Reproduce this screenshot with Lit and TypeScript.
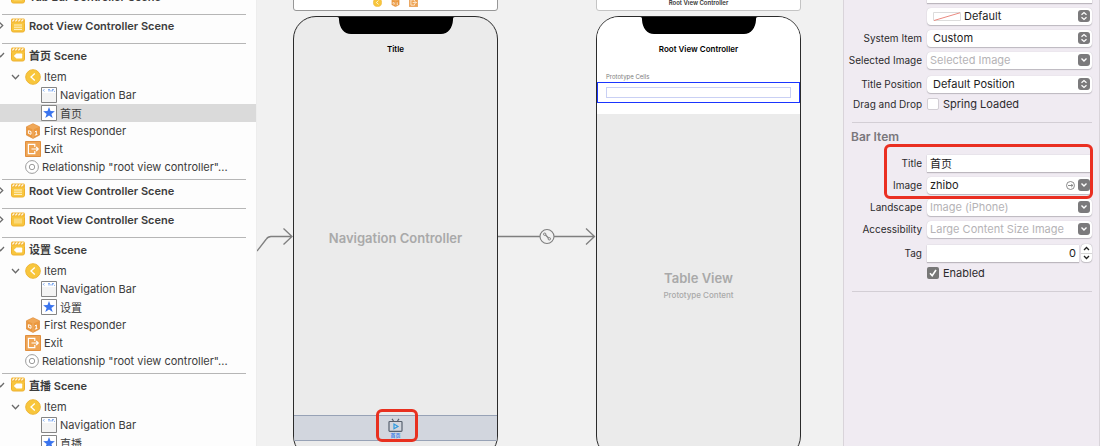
import { LitElement, html, css, svg, nothing, TemplateResult } from "lit";
import { customElement, property } from "lit/decorators.js";

const clip = (inner: TemplateResult) => svg`
  <rect x="0.5" y="3.5" width="13" height="10.5" rx="1.8" fill="#f8c63f" stroke="#eeb02f"/>
  <path d="M0 4.500V1.600L1 .6H13L14 1.600V4.500Z" fill="#f3b738"/>
  <path d="M1.400 3.400l1.900-2M4.400 3.400l1.900-2M7.400 3.400l1.900-2M10.400 3.400l1.900-2" stroke="#fffaf0" stroke-width="1.3"/>
  ${inner}`;

const icons: Record<string, TemplateResult> = {
  lines: html`<svg width="14" height="15" viewBox="0 0 14 15">${clip(svg`<path d="M3 7h8M3 9.2h8M3 11.4h8" stroke="#fff3d0" stroke-width="1"/>`)}</svg>`,
  block: html`<svg width="14" height="15" viewBox="0 0 14 15">${clip(svg`<path d="M3 6.5h8v5H3z" fill="#fbd878"/>`)}</svg>`,
  back: html`<svg width="14" height="15" viewBox="0 0 14 15">${clip(svg`<path d="M2.8 9l2.6-2.6h5a.8.8 0 0 1 .8.8v3.6a.8.8 0 0 1-.8.8h-5z" fill="#fff"/>`)}</svg>`,
  item: html`<svg width="16" height="16" viewBox="0 0 16 16"><circle cx="8" cy="8" r="7.3" fill="#f8c63c" stroke="#eeb636"/><path d="M9.8 4.6L6 8l3.8 3.4" fill="none" stroke="#fff" stroke-width="1.3"/></svg>`,
  navbar: html`<svg width="16" height="16" viewBox="0 0 16 16"><path d="M.5.5h15v15H.5z" fill="#f4f4f4" stroke="#858585"/><path d="M1 1h14v5H1z" fill="#fff"/><path d="M3.4 2.2L2.2 3.4l1.2 1M7 2.6h2M8 2.6v2M10 3v1.6M11 2.6h2M11.6 2.6v1.8M13 4.4h.9" fill="none" stroke="#5f95ee" stroke-width=".8"/></svg>`,
  star: html`<svg width="16" height="16" viewBox="0 0 16 16"><path d="M.5.5h15v15H.5z" fill="#fff" stroke="#858585"/><path d="M8 2l1.5 4.1 4.4.1-3.5 2.7 1.3 4.2L8 10.6l-3.7 2.5 1.3-4.2L2.1 6.2l4.4-.1z" fill="#3a74ee"/></svg>`,
  cube: html`<svg width="16" height="16" viewBox="0 0 16 16"><path d="M8 .7l6.5 3.1v8.3L8 15.4l-6.5-3.3V3.8z" fill="#eb983f" stroke="#dd8834" stroke-width=".7"/><path d="M1.7 4L8 6.4 14.3 4 8 1z" fill="#f0a858"/><path d="M8 6.4v8.8" stroke="#f7c78f" stroke-width=".6"/><path d="M3.4 7.700v2.700l2.600.9V8.500zM9.800 9l1.500-1v3.800M9.800 12.200l2.600-.8" fill="none" stroke="#fff" stroke-width="1"/></svg>`,
  exit: html`<svg width="16" height="16" viewBox="0 0 16 16"><path d="M.5.5h15v15H.5z" fill="#efa453" stroke="#e08f3f"/><path d="M9.8 6V3.3H3.4v9.4h6.4V10M6.5 8h6.6M11.2 6l2 2-2 2" fill="none" stroke="#fff" stroke-width="1.2"/></svg>`,
  ring: html`<svg width="14" height="14" viewBox="0 0 14 14"><circle cx="7" cy="7" r="6.4" fill="#fff" stroke="#9c9c9c"/><circle cx="7" cy="7" r="2.7" fill="none" stroke="#9c9c9c"/></svg>`,
  down: html`<svg width="9" height="6" viewBox="0 0 9 6"><path d="M1 1l3.5 3.7L8 1" fill="none" stroke="#6a6a6a" stroke-width="1.3"/></svg>`,
  right: html`<svg width="6" height="9" viewBox="0 0 6 9"><path d="M1 1l3.7 3.5L1 8" fill="none" stroke="#6a6a6a" stroke-width="1.3"/></svg>`,
};

interface Scene { name: string; icon: string; tab?: string; selected?: boolean; }

const scenes: Scene[] = [
  { name: "Tab Bar Controller Scene", icon: "block" },
  { name: "Root View Controller Scene", icon: "lines" },
  { name: "首页 Scene", icon: "back", tab: "首页", selected: true },
  { name: "Root View Controller Scene", icon: "lines" },
  { name: "Root View Controller Scene", icon: "block" },
  { name: "设置 Scene", icon: "back", tab: "设置" },
  { name: "直播 Scene", icon: "back", tab: "直播" },
];

@customElement("scene-outline")
class SceneOutline extends LitElement {
  static styles = css`
    :host { display: block; overflow: hidden; background: #fdfdfd; border-right: 1px solid #ededed; color: #3c3c3c; font-size: 11px; }
    .list { margin: -15px 0 0; padding: 0; list-style: none; }
    .scene { padding-top: 1px; }
    .scene::before { content: ""; display: block; height: 1px; margin: -1px 10px 0 2px; background: #b6b6b6; }
    .closed { padding-bottom: 7px; }
    .open { padding-bottom: 3px; }
    .head { display: flex; align-items: center; height: 21px; margin: 0; font-size: 11px; font-weight: 600; white-space: nowrap; }
    .fold { display: flex; flex: none; width: 11px; justify-content: flex-start; }
    .fold.down { margin-left: -4px; width: 15px; }
    .fold.side { margin-left: -2px; width: 13px; }
    .head svg, .row svg { flex: none; display: block; }
    .label { margin-left: 4px; }
    .rows { margin: 3px 0 0; padding: 0; list-style: none; }
    .row { display: flex; align-items: center; height: 18px; padding-left: 25px; white-space: nowrap; }
    .row .label { margin-left: 3px; }
    .parent { padding-left: 11px; }
    .parent .twist { width: 14px; display: flex; }
    .child { padding-left: 41px; }
    .selected { background: #dadada; }
  `;
  row(icon: string, text: string, kind = "") {
    return html`<li class="row ${kind}">${kind === "parent" ? html`<span class="twist">${icons.down}</span>` : nothing}${icons[icon]}<span class="label">${text}</span></li>`;
  }
  render() {
    return html`<ul class="list">${scenes.map((s) => html`
      <li class="scene ${s.tab ? "open" : "closed"}">
        <h3 class="head"><span class="fold ${s.tab ? "down" : "side"}">${s.tab ? icons.down : icons.right}</span>${icons[s.icon]}<span class="label">${s.name}</span></h3>
        ${s.tab ? html`<ul class="rows">
          ${this.row("item", "Item", "parent")}
          ${this.row("navbar", "Navigation Bar", "child")}
          ${this.row("star", s.tab, s.selected ? "child selected" : "child")}
          ${this.row("cube", "First Responder")}
          ${this.row("exit", "Exit")}
          ${this.row("ring", "Relationship \"root view controller\"...")}
        </ul>` : nothing}
      </li>`)}</ul>`;
  }
}

@customElement("story-canvas")
class StoryCanvas extends LitElement {
  static styles = css`
    :host { display: block; position: relative; overflow: hidden; background: #f1f1f1; }
    .links { position: absolute; left: 0; top: 0; }
    .dock { position: absolute; top: -12px; width: 205px; height: 23px; box-sizing: border-box; background: #fff; border: 1px solid #979797; border-radius: 3px; display: flex; align-items: flex-end; justify-content: center; }
    .dock svg { width: 9px; height: 9px; }
    .tools { gap: 9px; padding-bottom: 3px; }
    .caption { border-color: #c4c4c4; font-size: 6px; line-height: 8px; font-weight: 600; color: #333; padding-bottom: 3px; }
    .first { left: 36px; }
    .second { left: 339px; }
    .phone { position: absolute; top: 16px; width: 205px; height: 443px; box-sizing: border-box; border: 1px solid #2b2b2b; border-radius: 23px; background: #ebebeb; overflow: hidden; display: flex; flex-direction: column; align-items: center; }
    .notch { display: block; flex: none; }
    .title { margin: 8px 0 4px; font-size: 8px; line-height: 14px; font-weight: 600; color: #000; }
    .center { flex: 1; display: flex; flex-direction: column; align-items: center; justify-content: center; color: #a9a9a9; font-size: 13px; line-height: 18px; font-weight: 600; }
    .small { font-size: 8px; line-height: 16px; font-weight: 500; }
    .tabbar { align-self: stretch; height: 24px; box-sizing: content-box; border: solid #97a2b6; border-width: 1px 0; background: #d2d6de; display: flex; justify-content: center; margin-bottom: 17px; }
    .tab { display: flex; flex-direction: column; align-items: center; justify-content: center; font-size: 5px; line-height: 7px; font-weight: 600; color: #3f83e8; }
    .top { align-self: stretch; height: 97px; background: #fff; display: flex; flex-direction: column; align-items: center; }
    .proto { align-self: stretch; margin: 12px 0 0 9px; font-size: 6px; line-height: 10px; color: #7c7c7c; }
    .cell { align-self: stretch; height: 21px; box-sizing: border-box; border: 1px solid #1a35ff; padding: 4px 8px; display: flex; }
    .content { flex: 1; border: 1px solid #c9d0f4; }
    .mark { position: absolute; left: 119px; top: 409px; width: 42px; height: 33px; box-sizing: border-box; border: 3px solid #e8301f; border-radius: 6px; }
  `;
  notch() {
    return html`<svg class="notch" width="118" height="17" viewBox="0 0 118 17"><path d="M0 0h118c-2 0-2 1-2 3-.5 8-5 14-12 14H14C7 17 2.5 11 2 3 2 1 2 0 0 0z" fill="#000"/></svg>`;
  }
  render() {
    return html`
      <svg class="links" width="345" height="300" viewBox="0 0 345 300" fill="none" stroke="#7f7f7f" stroke-width="1.3">
        <path d="M0 251L9 239.500Q11 236.500 14 236.500H34M26.500 228.500L35 236.500L26.500 244.500"/>
        <path d="M241 236.500H283M297 236.500H337M329 228.500L337.500 236.500L329 244.500"/>
        <circle cx="290" cy="236.500" r="7" stroke-width="1.1"/>
        <circle cx="287.700" cy="234.200" r="1.200" stroke-width="1"/><circle cx="292.300" cy="238.800" r="1.200" stroke-width="1"/>
        <path d="M288.500 235L291.500 238"/>
      </svg>
      <div class="dock tools first">${icons.item}${icons.cube}${icons.exit}</div>
      <div class="dock caption second">Root View Controller</div>
      <section class="phone first">
        ${this.notch()}
        <div class="title">Title</div>
        <div class="center">Navigation Controller</div>
        <div class="tabbar"><div class="tab">
          <svg width="15" height="14" viewBox="0 0 15 14" fill="none"><rect x="1" y="3.500" width="13" height="9.800" rx=".8" stroke="#57606d" stroke-width="1.200"/><path d="M4 .8L5.500 3M11 .8L9.500 3" stroke="#57606d" stroke-width="1.200"/><path d="M6 6v4.800l4-2.400z" stroke="#2f9be0" stroke-width="1.200"/></svg>
          <span>首页</span></div></div>
      </section>
      <section class="phone second">
        <div class="top">
          ${this.notch()}
          <div class="title">Root View Controller</div>
          <div class="proto">Prototype Cells</div>
          <div class="cell"><div class="content"></div></div>
        </div>
        <div class="center"><span>Table View</span><span class="small">Prototype Content</span></div>
      </section>
      <div class="mark"></div>`;
  }
}

@customElement("item-inspector")
class ItemInspector extends LitElement {
  static styles = css`
    :host { display: block; overflow: hidden; background: #f0ebf2; border-left: 1px solid #d9d4da; border-right: 1px solid #d9d4da; color: #2c2a2d; }
    .panel { padding: 0 7px 0 0; margin-top: -17px; }
    .row { display: grid; grid-template-columns: 78px minmax(0, 1fr); column-gap: 5px; align-items: center; height: 22px; font-size: 10px; }
    .row.short { height: 18px; }
    .row.gap { margin-top: 2px; }
    .name { text-align: right; white-space: nowrap; }
    .box { display: flex; align-items: center; height: 17px; box-sizing: border-box; background: #fff; border-radius: 4px; box-shadow: 0 1px 1px #bcb7be, 0 0 1px #c5c0c8; padding-right: 2px; }
    .square { border-radius: 0; }
    .box input, .box select { flex: 1; min-width: 0; width: 100%; height: 17px; border: 0; margin: 0; background: none; appearance: none; outline: none; font: inherit; font-size: 11px; color: #1d1d1d; padding: 0 3px; }
    .box select { padding: 0 6px; }
    .box input::placeholder { color: #b5b3b6; opacity: 1; }
    .swatch { flex: none; margin-left: 6px; }
    .box .swatch + select { padding-left: 3px; }
    .knob { flex: none; display: flex; width: 12px; height: 12px; padding: 0; border: 0; border-radius: 3px; background: #7b7a7c; align-items: center; justify-content: center; pointer-events: none; }
    .go { flex: none; display: flex; padding: 0; border: 0; background: none; margin-right: 3px; }
    .line { height: 1px; border: 0; margin: 9px 0 0 8px; background: #d3ced5; }
    .heading { margin: 5px 0 7px 7px; font-size: 12px; line-height: 17px; font-weight: 600; color: #7a777c; }
    .check { display: flex; align-items: center; gap: 4px; font-size: 11px; }
    .check input { appearance: none; width: 12px; height: 12px; margin: 0; box-sizing: border-box; background: #fff; border: 1px solid #d2ced4; border-radius: 2px; }
    .check input:checked { border: 0; background: #777 url("data:image/svg+xml,%3Csvg xmlns='http://www.w3.org/2000/svg' viewBox='0 0 12 12'%3E%3Cpath d='M3 6.300L5.200 8.800L9 3' fill='none' stroke='white' stroke-width='1.600'/%3E%3C/svg%3E"); }
    .number { display: flex; gap: 2px; align-items: center; }
    .number .box { flex: 1; padding-right: 0; }
    .number input { text-align: right; }
    .stepper { display: flex; flex-direction: column; width: 11px; height: 18px; border-radius: 4px; background: #fff; box-shadow: 0 0 1px #8d8a8f, 0 1px 1px #c9c4cb; }
    .stepper button { flex: 1; padding: 0; border: 0; background: none; display: flex; align-items: center; justify-content: center; }
    .stepper button + button { border-top: 1px solid #d5d5d5; }
    .marked { position: relative; }
    .mark { position: absolute; left: 40px; right: -1px; top: -8px; bottom: -3px; border: 3px solid #ea2f22; border-radius: 6px; pointer-events: none; }
  `;
  @property() tag = "0";

  chevrons = html`<span class="knob"><svg width="8" height="10" viewBox="0 0 8 10" fill="none" stroke="#fff" stroke-width="1.200"><path d="M1.500 3.800L4 1.500L6.500 3.800M1.500 6.200L4 8.500L6.500 6.200"/></svg></span>`;

  select(id: string, name: string, value: string, kind = "", swatch = false) {
    return html`<div class="row ${kind}"><label class="name" for=${id}>${name}</label>
      <div class="box">${swatch ? html`<svg class="swatch" width="28" height="9" viewBox="0 0 28 9"><path d="M.5.5h27v8H.5z" fill="#fff" stroke="#dcdcdc"/><path d="M1 8.500L27 .8" stroke="#ea8a80"/></svg>` : nothing}
      <select id=${id} aria-label=${name || value}><option>${value}</option></select>${this.chevrons}</div></div>`;
  }
  combo(id: string, name: string, value: string, hint: string, go = false) {
    return html`<div class="row"><label class="name" for=${id}>${name}</label>
      <div class="box"><input id=${id} .value=${value} placeholder=${hint}>
      ${go ? html`<button class="go" aria-label="Open"><svg width="9" height="9" viewBox="0 0 9 9" fill="none" stroke="#7d7d7d" stroke-width=".9"><circle cx="4.500" cy="4.500" r="4"/><path d="M2 4.500h4.800M5.200 2.900l1.600 1.600-1.600 1.600"/></svg></button>` : nothing}
      <button class="knob" aria-label="Choose"><svg width="8" height="6" viewBox="0 0 8 6"><path d="M1.500 1.500L4 4L6.500 1.500" fill="none" stroke="#fff" stroke-width="1.400"/></svg></button></div></div>`;
  }
  render() {
    return html`<div class="panel">
      <div class="row"><label class="name" for="badge">Badge</label><div class="box square"><input id="badge"></div></div>
      ${this.select("color", "", "Default", "", true)}
      ${this.select("system", "System Item", "Custom")}
      ${this.combo("selimg", "Selected Image", "", "Selected Image")}
      ${this.select("pos", "Title Position", "Default Position", "gap")}
      <div class="row short"><span class="name">Drag and Drop</span><label class="check"><input type="checkbox">Spring Loaded</label></div>
      <hr class="line">
      <h2 class="heading">Bar Item</h2>
      <div class="marked">
        <div class="row"><label class="name" for="title">Title</label><div class="box square"><input id="title" .value=${"首页"}></div></div>
        ${this.combo("image", "Image", "zhibo", "", true)}
        <div class="mark"></div>
      </div>
      ${this.combo("land", "Landscape", "", "Image (iPhone)")}
      ${this.combo("acc", "Accessibility", "", "Large Content Size Image")}
      <div class="row gap"><label class="name" for="tag">Tag</label><div class="number"><div class="box square"><input id="tag" .value=${this.tag}></div>
        <div class="stepper"><button aria-label="Increase"><svg width="7" height="5" viewBox="0 0 7 5"><path d="M1 4l2.500-2.500L6 4" fill="none" stroke="#222" stroke-width="1.300"/></svg></button><button aria-label="Decrease"><svg width="7" height="5" viewBox="0 0 7 5"><path d="M1 1l2.500 2.500L6 1" fill="none" stroke="#222" stroke-width="1.300"/></svg></button></div></div></div>
      <div class="row short"><span></span><label class="check"><input type="checkbox" checked>Enabled</label></div>
      <hr class="line">
    </div>`;
  }
}

@customElement("app-root")
class AppRoot extends LitElement {
  static styles = css`
    :host { display: block; font-family: Inter, "Noto Sans CJK SC", sans-serif; }
    .shell { display: grid; grid-template-columns: 257px minmax(0, 1fr) 257px; height: 100vh; overflow: hidden; }
  `;
  render() {
    return html`<main class="shell"><scene-outline></scene-outline><story-canvas></story-canvas><item-inspector></item-inspector></main>`;
  }
}
